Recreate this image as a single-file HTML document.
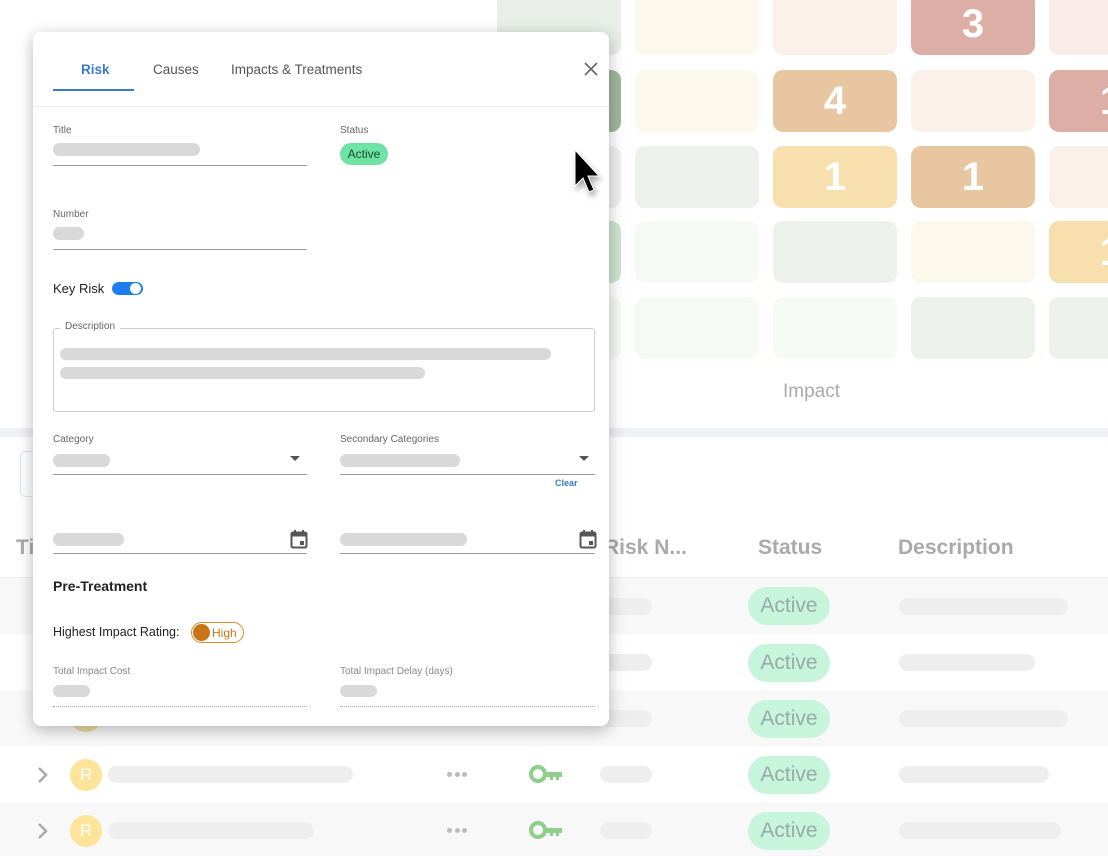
<!DOCTYPE html>
<html><head><meta charset="utf-8"><style>
*{box-sizing:border-box;margin:0;padding:0}
body{width:1108px;height:856px;overflow:hidden;background:#fff;font-family:"Liberation Sans",Arial,sans-serif;position:relative}
.abs{position:absolute}
.cell{position:absolute;width:124px;height:62px;border-radius:10px;color:#fff;font-weight:bold;font-size:40px;text-align:center;line-height:62px}
.bar{position:absolute;background:#d9d9d9;border-radius:8px}
.lbar{position:absolute;background:#eeeeee;border-radius:9px}
.act{position:absolute;left:748px;width:82px;height:38px;border-radius:19px;background:#c6f5dc;color:#9aa;font-size:21px;text-align:center;line-height:38px}
.lbl{position:absolute;font-size:10px;color:#666}
.line{position:absolute;height:1px;background:#999}
.dots{position:absolute;left:447px;width:24px;height:6px;display:flex;gap:2.5px}
.dots i{display:block;flex:none;width:5px;height:5px;border-radius:50%;background:#bbb}
</style></head><body>
<div class="abs" style="left:0;top:428px;width:1108px;height:9px;background:#eef2f6"></div>
<div class="cell" style="left:497px;top:-7px;background:#e9efe8"></div>
<div class="cell" style="left:635px;top:-7px;background:#fdf8ec"></div>
<div class="cell" style="left:773px;top:-7px;background:#fbf1ea"></div>
<div class="cell" style="left:911px;top:-7px;background:#dcaea6">3</div>
<div class="cell" style="left:1049px;top:-7px;background:#f8ebe8"></div>
<div class="cell" style="left:497px;top:70px;background:#9fb89b"></div>
<div class="cell" style="left:635px;top:70px;background:#fdf8ec"></div>
<div class="cell" style="left:773px;top:70px;background:#e8c69f">4</div>
<div class="cell" style="left:911px;top:70px;background:#fbf1ea"></div>
<div class="cell" style="left:1049px;top:70px;background:#dcaea6">1</div>
<div class="cell" style="left:497px;top:146px;background:#eef2ed"></div>
<div class="cell" style="left:635px;top:146px;background:#edf1ec"></div>
<div class="cell" style="left:773px;top:146px;background:#f8e0ae">1</div>
<div class="cell" style="left:911px;top:146px;background:#e8c69f">1</div>
<div class="cell" style="left:1049px;top:146px;background:#fbf1ea"></div>
<div class="cell" style="left:497px;top:221px;background:#cfe5cf"></div>
<div class="cell" style="left:635px;top:221px;background:#f5faf4"></div>
<div class="cell" style="left:773px;top:221px;background:#edf1ec"></div>
<div class="cell" style="left:911px;top:221px;background:#fdf8ec"></div>
<div class="cell" style="left:1049px;top:221px;background:#f8e0ae">1</div>
<div class="cell" style="left:497px;top:297px;background:#f5faf4"></div>
<div class="cell" style="left:635px;top:297px;background:#f5faf4"></div>
<div class="cell" style="left:773px;top:297px;background:#f5faf4"></div>
<div class="cell" style="left:911px;top:297px;background:#edf1ec"></div>
<div class="cell" style="left:1049px;top:297px;background:#edf1ec"></div>
<div class="abs" style="left:783px;top:381px;font-size:19px;color:#aaa">Impact</div>
<div class="abs" style="left:20px;top:451px;width:40px;height:46px;border:1px solid #dde6ef;border-radius:6px"></div>
<div class="abs" style="left:16px;top:536px;font-size:21px;font-weight:bold;color:#aaa">Ti</div>
<div class="abs" style="left:604px;top:536px;font-size:21px;font-weight:bold;color:#aaa">Risk N...</div>
<div class="abs" style="left:758px;top:536px;font-size:21px;font-weight:bold;color:#aaa">Status</div>
<div class="abs" style="left:898px;top:536px;font-size:21px;font-weight:bold;color:#aaa">Description</div>
<div class="abs" style="left:0;top:577px;width:1108px;height:1px;background:#eee"></div>
<div class="abs" style="left:0;top:578px;width:1108px;height:56px;background:#f8f8f8"></div>
<div class="abs" style="left:0;top:690px;width:1108px;height:56px;background:#f8f8f8"></div>
<div class="abs" style="left:0;top:802px;width:1108px;height:54px;background:#f8f8f8"></div>
<div class="lbar" style="left:600px;top:598px;width:52px;height:17px"></div>
<div class="lbar" style="left:600px;top:654px;width:52px;height:17px"></div>
<div class="lbar" style="left:600px;top:710px;width:52px;height:17px"></div>
<div class="lbar" style="left:600px;top:766px;width:52px;height:17px"></div>
<div class="lbar" style="left:600px;top:822px;width:52px;height:17px"></div>
<div class="act" style="top:587px">Active</div>
<div class="act" style="top:644px">Active</div>
<div class="act" style="top:700px">Active</div>
<div class="act" style="top:756px">Active</div>
<div class="act" style="top:812px">Active</div>
<div class="lbar" style="left:899px;top:598px;width:169px;height:17px"></div>
<div class="lbar" style="left:899px;top:654px;width:136px;height:17px"></div>
<div class="lbar" style="left:899px;top:710px;width:169px;height:17px"></div>
<div class="lbar" style="left:899px;top:766px;width:150px;height:17px"></div>
<div class="lbar" style="left:899px;top:822px;width:162px;height:17px"></div>
<svg class="abs" style="left:36px;top:765px" width="14" height="20" viewBox="0 0 14 20"><path d="M3 3 L10 10 L3 17" fill="none" stroke="#aaa" stroke-width="2.5"/></svg>
<svg class="abs" style="left:36px;top:821px" width="14" height="20" viewBox="0 0 14 20"><path d="M3 3 L10 10 L3 17" fill="none" stroke="#aaa" stroke-width="2.5"/></svg>
<div class="abs" style="left:70px;top:759px;width:32px;height:32px;border-radius:50%;background:#fde49a;color:#fff;text-align:center;line-height:32px;font-size:17px">R</div>
<div class="abs" style="left:70px;top:815px;width:32px;height:32px;border-radius:50%;background:#fde49a;color:#fff;text-align:center;line-height:32px;font-size:17px">R</div>
<div class="abs" style="left:70px;top:712px;width:32px;height:20px;border-radius:0 0 16px 16px;background:#f0dca0"></div>
<div class="lbar" style="left:108px;top:766px;width:245px;height:17px"></div>
<div class="lbar" style="left:108px;top:822px;width:206px;height:17px"></div>
<div class="dots" style="top:772px"><i></i><i></i><i></i></div>
<div class="dots" style="top:828px"><i></i><i></i><i></i></div>
<svg class="abs" style="left:529px;top:764px" width="36" height="20" viewBox="0 0 36 20"><circle cx="9" cy="10" r="7" fill="none" stroke="#8fcf8a" stroke-width="4"/><path d="M15 8h18v5h-3v3h-3v-3h-3v3h-3v-3h-6z" fill="#8fcf8a"/></svg>
<svg class="abs" style="left:529px;top:820px" width="36" height="20" viewBox="0 0 36 20"><circle cx="9" cy="10" r="7" fill="none" stroke="#8fcf8a" stroke-width="4"/><path d="M15 8h18v5h-3v3h-3v-3h-3v3h-3v-3h-6z" fill="#8fcf8a"/></svg>

<div class="abs" style="left:33px;top:32px;width:576px;height:694px;background:#fff;border-radius:8px;box-shadow:0 4px 16px rgba(0,0,0,.28)">
 <div class="abs" style="left:48px;top:30px;font-size:13.5px;color:#3a7bc8;font-weight:bold">Risk</div>
 <div class="abs" style="left:20px;top:57px;width:81px;height:2px;background:#3a7bc8"></div>
 <div class="abs" style="left:120px;top:30px;font-size:13.5px;color:#555">Causes</div>
 <div class="abs" style="left:198px;top:30px;font-size:13.5px;color:#555">Impacts &amp; Treatments</div>
 <svg class="abs" style="left:551px;top:30px" width="14" height="14" viewBox="0 0 14 14"><path d="M1 1L13 13M13 1L1 13" stroke="#666" stroke-width="1.6"/></svg>
 <div class="abs" style="left:0;top:74px;width:576px;height:1px;background:#eee"></div>
 <div class="lbl" style="left:20px;top:93px">Title</div>
 <div class="bar" style="left:20px;top:111px;width:147px;height:13px"></div>
 <div class="line" style="left:20px;top:133px;width:254px"></div>
 <div class="lbl" style="left:307px;top:93px">Status</div>
 <div class="abs" style="left:307px;top:111px;width:48px;height:22px;border-radius:11px;background:#6ee3a4;color:#1a4a30;font-size:12px;text-align:center;line-height:22px">Active</div>
 <div class="lbl" style="left:20px;top:177px">Number</div>
 <div class="bar" style="left:20px;top:195px;width:31px;height:13px"></div>
 <div class="line" style="left:20px;top:217px;width:254px"></div>
 <div class="abs" style="left:20px;top:249px;font-size:13px;color:#222">Key Risk</div>
 <div class="abs" style="left:79px;top:250px;width:31px;height:13px;border-radius:7px;background:#1e7ef0"></div>
 <div class="abs" style="left:97px;top:251px;width:11px;height:11px;border-radius:50%;background:#fff"></div>
 <div class="abs" style="left:20px;top:296px;width:542px;height:84px;border:1px solid #ccc;border-radius:3px"></div>
 <div class="abs" style="left:27px;top:289px;padding:0 5px;background:#fff;font-size:10px;color:#666">Description</div>
 <div class="bar" style="left:27px;top:316px;width:491px;height:12px"></div>
 <div class="bar" style="left:27px;top:335px;width:365px;height:12px"></div>
 <div class="lbl" style="left:20px;top:402px">Category</div>
 <div class="bar" style="left:20px;top:422px;width:57px;height:13px"></div>
 <div class="abs" style="left:257px;top:424px;width:0;height:0;border-left:5px solid transparent;border-right:5px solid transparent;border-top:5px solid #555"></div>
 <div class="line" style="left:20px;top:442px;width:254px"></div>
 <div class="lbl" style="left:307px;top:402px">Secondary Categories</div>
 <div class="bar" style="left:307px;top:422px;width:120px;height:13px"></div>
 <div class="abs" style="left:546px;top:424px;width:0;height:0;border-left:5px solid transparent;border-right:5px solid transparent;border-top:5px solid #555"></div>
 <div class="line" style="left:307px;top:442px;width:255px"></div>
 <div class="abs" style="left:522px;top:446px;font-size:9px;font-weight:bold;color:#3a7bc8">Clear</div>
 <div class="bar" style="left:20px;top:501px;width:71px;height:13px"></div>
 <svg class="abs" style="left:257px;top:497px" width="18" height="20" viewBox="0 0 18 20"><rect x="1.5" y="3.5" width="15" height="15" rx="1.5" fill="none" stroke="#555" stroke-width="2"/><rect x="1.5" y="3.5" width="15" height="4" fill="#555"/><rect x="4" y="1" width="2" height="4" fill="#555"/><rect x="12" y="1" width="2" height="4" fill="#555"/><rect x="10" y="12" width="4" height="4" fill="#555"/></svg>
 <div class="line" style="left:20px;top:521px;width:254px"></div>
 <div class="bar" style="left:307px;top:501px;width:127px;height:13px"></div>
 <svg class="abs" style="left:546px;top:497px" width="18" height="20" viewBox="0 0 18 20"><rect x="1.5" y="3.5" width="15" height="15" rx="1.5" fill="none" stroke="#555" stroke-width="2"/><rect x="1.5" y="3.5" width="15" height="4" fill="#555"/><rect x="4" y="1" width="2" height="4" fill="#555"/><rect x="12" y="1" width="2" height="4" fill="#555"/><rect x="10" y="12" width="4" height="4" fill="#555"/></svg>
 <div class="line" style="left:307px;top:521px;width:255px"></div>
 <div class="abs" style="left:20px;top:546px;font-size:14px;font-weight:bold;color:#222">Pre-Treatment</div>
 <div class="abs" style="left:20px;top:593px;font-size:12.5px;color:#222">Highest Impact Rating:</div>
 <div class="abs" style="left:158px;top:590px;width:53px;height:21px;border:1px solid #d98a2a;border-radius:11px"></div>
 <div class="abs" style="left:160px;top:592px;width:17px;height:17px;border-radius:50%;background:#c87418"></div>
 <div class="abs" style="left:179px;top:594px;font-size:12px;color:#c87418">High</div>
 <div class="lbl" style="left:20px;top:634px;color:#888">Total Impact Cost</div>
 <div class="bar" style="left:20px;top:653px;width:37px;height:12px"></div>
 <div class="abs" style="left:20px;top:674px;width:254px;border-top:1px dotted #aaa"></div>
 <div class="lbl" style="left:307px;top:634px;color:#888">Total Impact Delay (days)</div>
 <div class="bar" style="left:307px;top:653px;width:37px;height:12px"></div>
 <div class="abs" style="left:307px;top:674px;width:255px;border-top:1px dotted #aaa"></div>
</div>
<svg class="abs" style="left:572px;top:148px;filter:drop-shadow(2px 4px 3px rgba(0,0,0,.35))" width="32" height="48" viewBox="0 0 32 48"><path d="M3 2 L3 38 L11 30 L17 44 L22 42 L16 28 L27 28 Z" fill="#000" stroke="#fff" stroke-width="1"/></svg>
</body></html>
